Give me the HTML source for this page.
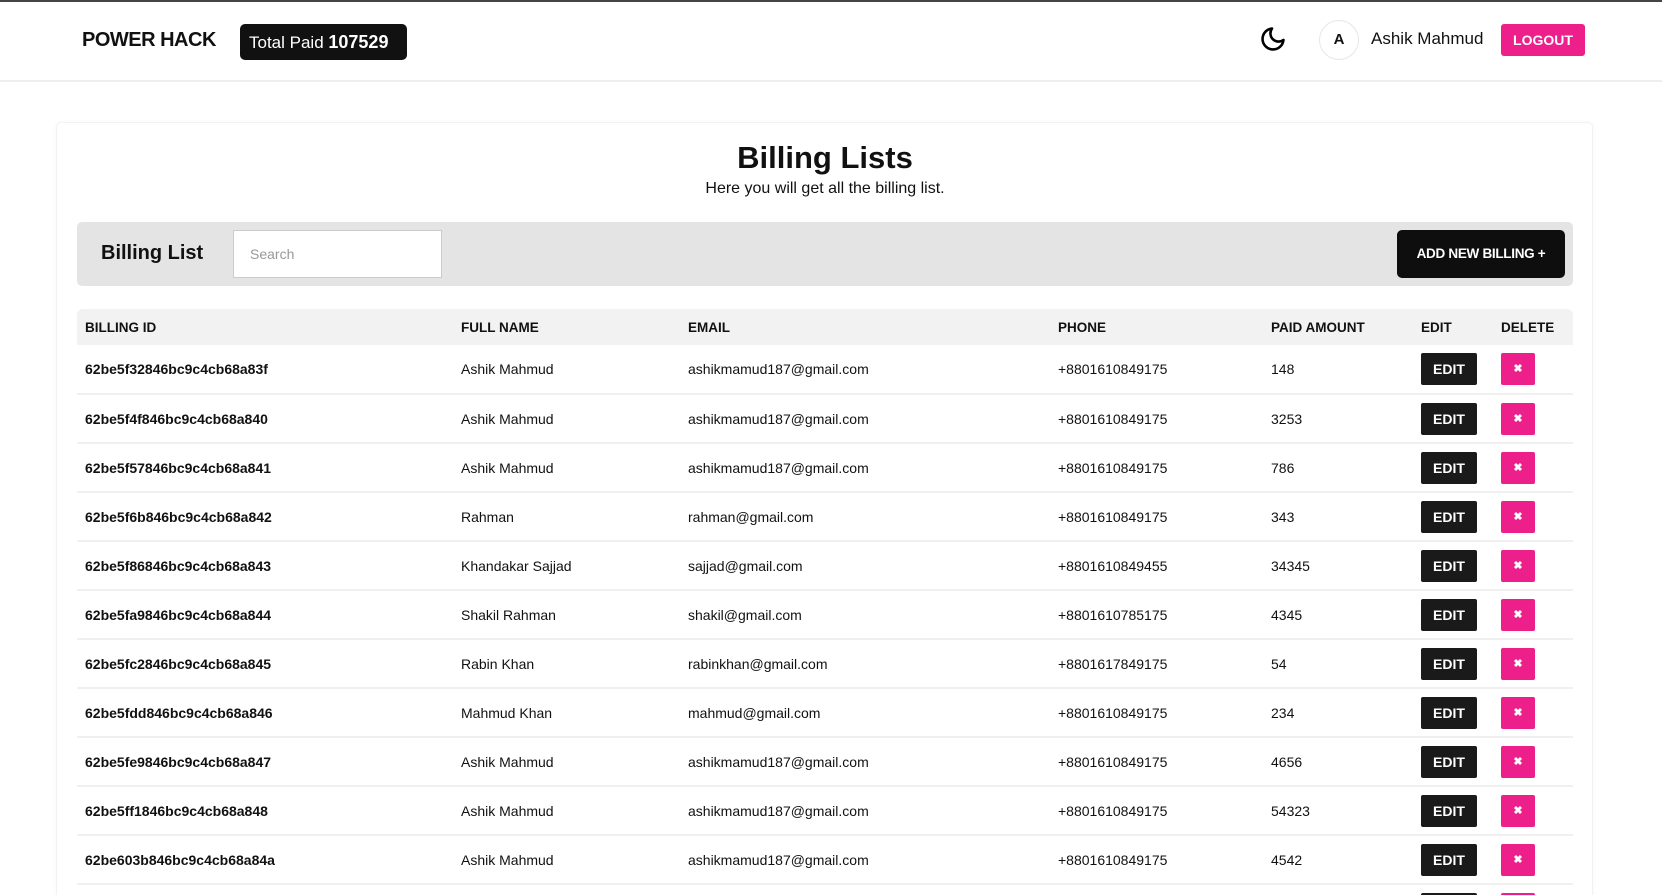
<!DOCTYPE html>
<html><head><meta charset="utf-8"><style>
*{box-sizing:border-box;margin:0;padding:0}
html,body{width:1662px;height:895px;overflow:hidden}
body{background:#fff;font-family:"Liberation Sans",sans-serif;color:#111;position:relative}
.topb{position:absolute;left:0;top:0;width:1662px;height:2px;background:#444}
.hdr{position:absolute;left:0;top:2px;width:1662px;height:80px;border-bottom:2px solid #eee}
.logo{position:absolute;left:82px;top:27px;font-size:20px;font-weight:bold;letter-spacing:-0.5px}
.badge{position:absolute;left:240px;top:22px;width:167px;height:36px;background:#111;color:#fff;border-radius:5px;font-size:17px;line-height:36px;padding-left:9px;white-space:nowrap}
.badge b{font-size:18px}
.moon{position:absolute;left:1259px;top:23px}
.av{position:absolute;left:1319px;top:18px;width:40px;height:40px;border:1px solid #e6e6e6;border-radius:50%;text-align:center;line-height:38px;font-weight:bold;font-size:15px}
.nm{position:absolute;left:1371px;top:27px;font-size:17px}
.lo{position:absolute;left:1501px;top:22px;width:84px;height:32px;background:#ec1f8b;color:#fff;border-radius:3px;font-weight:bold;font-size:14px;text-align:center;line-height:32px}
.card{position:absolute;left:56px;top:122px;width:1537px;height:900px;border:1px solid #f2f2f2;border-radius:5px;box-shadow:0 0 4px rgba(0,0,0,.04)}
h1{position:absolute;left:0;width:1650px;top:140px;text-align:center;font-size:31px}
.sub{position:absolute;left:0;width:1650px;top:180px;text-align:center;font-size:16px}
.bar{position:absolute;left:77px;top:222px;width:1496px;height:64px;background:#e4e4e4;border-radius:5px}
.bar .t{position:absolute;left:24px;top:20px;font-size:20px;font-weight:bold}
.bar .s{position:absolute;top:8px;left:156px;width:209px;height:48px;background:#fff;border:1px solid #ccc;font-size:14px;color:#999;padding:15px 16px}
.add{position:absolute;left:1320px;top:8px;width:168px;height:48px;background:#0e0e0e;color:#fff;border-radius:5px;font-weight:bold;font-size:13.5px;text-align:center;line-height:48px;letter-spacing:-.3px}
table{position:absolute;left:77px;top:309px;width:1496px;border-collapse:collapse;font-size:14px}
th{background:#f2f2f2;height:36px;text-align:left;font-size:13.5px;padding-left:8px}
th:first-child{border-radius:6px 0 0 0}th:last-child{border-radius:0 6px 0 0}
td{height:49px;border-bottom:2px solid #f0f0f0;padding-left:8px}
td:first-child{font-weight:bold}
.e{display:inline-block;width:56px;height:32px;background:#1a1a1a;color:#fff;font-weight:bold;text-align:center;line-height:32px;border-radius:2px;font-size:14px}
.d{display:inline-block;width:34px;height:32px;background:#ec1f8b;color:#fff;font-weight:bold;text-align:center;line-height:32px;border-radius:2px;font-size:11px}
</style></head><body>
<div class="topb"></div>
<div class="hdr">
<div class="logo">POWER HACK</div>
<div class="badge">Total Paid <b>107529</b></div>
<svg class="moon" width="28" height="28" viewBox="0 0 24 24" fill="none" stroke="#000" stroke-width="2.2" stroke-linecap="round" stroke-linejoin="round"><path d="M21 12.8A9 9 0 1 1 11.2 3a7 7 0 0 0 9.8 9.8z"/></svg>
<div class="av">A</div>
<div class="nm">Ashik Mahmud</div>
<div class="lo">LOGOUT</div>
</div>
<div class="card"></div>
<h1>Billing Lists</h1>
<div class="sub">Here you will get all the billing list.</div>
<div class="bar"><div class="t">Billing List</div><div class="s">Search</div><div class="add">ADD NEW BILLING +</div></div>
<table>
<colgroup><col style="width:376px"><col style="width:227px"><col style="width:370px"><col style="width:213px"><col style="width:150px"><col style="width:80px"><col></colgroup>
<tr><th>BILLING ID</th><th>FULL NAME</th><th>EMAIL</th><th>PHONE</th><th>PAID AMOUNT</th><th>EDIT</th><th>DELETE</th></tr>
<tr><td>62be5f32846bc9c4cb68a83f</td><td>Ashik Mahmud</td><td>ashikmamud187@gmail.com</td><td>+8801610849175</td><td>148</td><td><span class="e">EDIT</span></td><td><span class="d">✖</span></td></tr>
<tr><td>62be5f4f846bc9c4cb68a840</td><td>Ashik Mahmud</td><td>ashikmamud187@gmail.com</td><td>+8801610849175</td><td>3253</td><td><span class="e">EDIT</span></td><td><span class="d">✖</span></td></tr>
<tr><td>62be5f57846bc9c4cb68a841</td><td>Ashik Mahmud</td><td>ashikmamud187@gmail.com</td><td>+8801610849175</td><td>786</td><td><span class="e">EDIT</span></td><td><span class="d">✖</span></td></tr>
<tr><td>62be5f6b846bc9c4cb68a842</td><td>Rahman</td><td>rahman@gmail.com</td><td>+8801610849175</td><td>343</td><td><span class="e">EDIT</span></td><td><span class="d">✖</span></td></tr>
<tr><td>62be5f86846bc9c4cb68a843</td><td>Khandakar Sajjad</td><td>sajjad@gmail.com</td><td>+8801610849455</td><td>34345</td><td><span class="e">EDIT</span></td><td><span class="d">✖</span></td></tr>
<tr><td>62be5fa9846bc9c4cb68a844</td><td>Shakil Rahman</td><td>shakil@gmail.com</td><td>+8801610785175</td><td>4345</td><td><span class="e">EDIT</span></td><td><span class="d">✖</span></td></tr>
<tr><td>62be5fc2846bc9c4cb68a845</td><td>Rabin Khan</td><td>rabinkhan@gmail.com</td><td>+8801617849175</td><td>54</td><td><span class="e">EDIT</span></td><td><span class="d">✖</span></td></tr>
<tr><td>62be5fdd846bc9c4cb68a846</td><td>Mahmud Khan</td><td>mahmud@gmail.com</td><td>+8801610849175</td><td>234</td><td><span class="e">EDIT</span></td><td><span class="d">✖</span></td></tr>
<tr><td>62be5fe9846bc9c4cb68a847</td><td>Ashik Mahmud</td><td>ashikmamud187@gmail.com</td><td>+8801610849175</td><td>4656</td><td><span class="e">EDIT</span></td><td><span class="d">✖</span></td></tr>
<tr><td>62be5ff1846bc9c4cb68a848</td><td>Ashik Mahmud</td><td>ashikmamud187@gmail.com</td><td>+8801610849175</td><td>54323</td><td><span class="e">EDIT</span></td><td><span class="d">✖</span></td></tr>
<tr><td>62be603b846bc9c4cb68a84a</td><td>Ashik Mahmud</td><td>ashikmamud187@gmail.com</td><td>+8801610849175</td><td>4542</td><td><span class="e">EDIT</span></td><td><span class="d">✖</span></td></tr>
<tr><td>62be6050846bc9c4cb68a84b</td><td>Ashik Mahmud</td><td>ashikmamud187@gmail.com</td><td>+8801610849175</td><td>100</td><td><span class="e">EDIT</span></td><td><span class="d">✖</span></td></tr>
</table>
</body></html>
